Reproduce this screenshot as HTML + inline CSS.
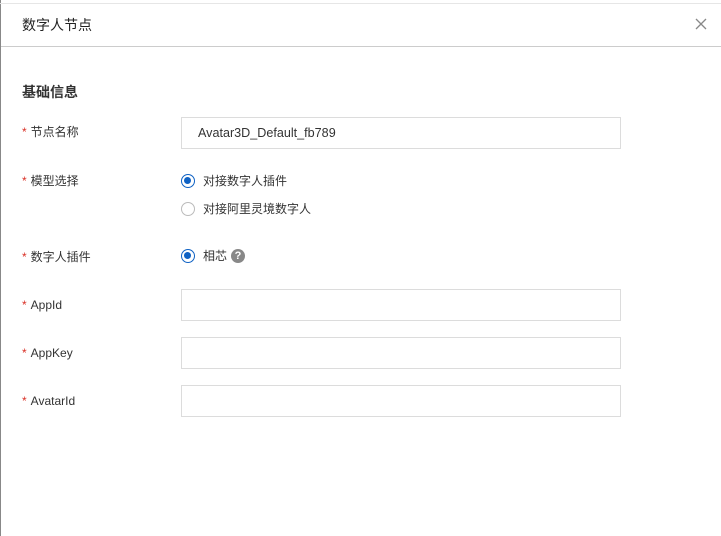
<!DOCTYPE html>
<html><head><meta charset="utf-8"><style>
body{margin:0;width:721px;height:536px;background:#fff;position:relative;overflow:hidden;font-family:"Liberation Sans","Noto Sans CJK SC",sans-serif;color:#333;}
.lb{position:absolute;left:0;top:0;width:1px;height:536px;background:#888}
.tb{position:absolute;left:0;top:3px;width:721px;height:1px;background:#e6e6e6}
.hd{position:absolute;left:1px;top:46px;width:720px;height:1px;background:#ccc}
.t{position:absolute;font-size:12px;line-height:16px;white-space:nowrap}
.req{color:#d93026;margin-right:4px}
.inp{position:absolute;left:181px;width:440px;height:32px;border:1px solid #dcdcdc;box-sizing:border-box;}
.r{position:absolute;left:181px;width:14px;height:14px;border-radius:50%;box-sizing:border-box;border:1px solid #bbb}
.r.on{border:1.5px solid #0f62c4}
.r.on:after{content:"";position:absolute;left:2px;top:2px;width:7px;height:7px;border-radius:50%;background:#0f62c4}
</style></head><body>
<div class="lb"></div><div class="tb"></div><div class="hd"></div>
<div class="t" style="left:22px;top:17px;font-size:14px;color:#222">数字人节点</div>
<svg style="position:absolute;left:695px;top:18px" width="12" height="12"><path d="M1 1L11 11M11 1L1 11" stroke="#888" stroke-width="1.3"/></svg>
<div class="t" style="left:22px;top:84px;font-size:14px;font-weight:bold;color:#333">基础信息</div>
<div class="t" style="left:22px;top:124px"><span class="req">*</span>节点名称</div>
<div class="inp" style="top:117px"></div>
<div class="t" style="left:198px;top:125px;font-size:12.6px;color:#333">Avatar3D_Default_fb789</div>
<div class="t" style="left:22px;top:173px"><span class="req">*</span>模型选择</div>
<div class="r on" style="top:174px"></div><div class="t" style="left:203px;top:173px">对接数字人插件</div>
<div class="r" style="top:202px"></div><div class="t" style="left:203px;top:201px">对接阿里灵境数字人</div>
<div class="t" style="left:22px;top:249px"><span class="req">*</span>数字人插件</div>
<div class="r on" style="top:249px"></div><div class="t" style="left:203px;top:248px">相芯</div>
<div style="position:absolute;left:231px;top:249px;width:14px;height:14px;border-radius:50%;background:#888;color:#fff;font-size:11px;font-weight:bold;text-align:center;line-height:14px">?</div>
<div class="t" style="left:22px;top:297px"><span class="req">*</span>AppId</div>
<div class="inp" style="top:289px"></div>
<div class="t" style="left:22px;top:345px"><span class="req">*</span>AppKey</div>
<div class="inp" style="top:337px"></div>
<div class="t" style="left:22px;top:393px"><span class="req">*</span>AvatarId</div>
<div class="inp" style="top:385px"></div>
</body></html>
